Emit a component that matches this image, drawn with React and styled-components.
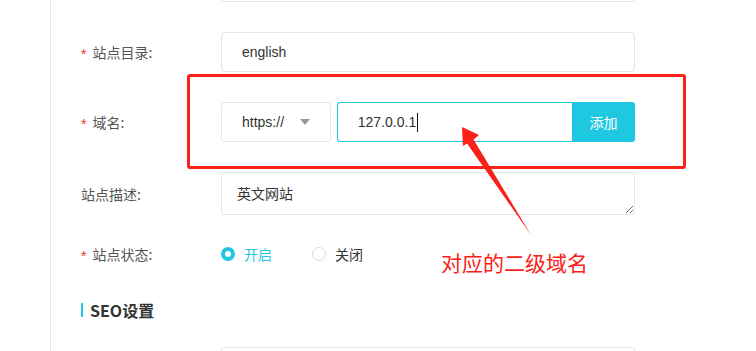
import React from "react";
import styled, { createGlobalStyle } from "styled-components";

const GlobalStyle = createGlobalStyle`
  html, body {
    margin: 0;
    padding: 0;
    background: #fff;
    height: 351px;
    overflow: hidden;
  }
  body {
    font-family: "Liberation Sans", "Noto Sans CJK SC", sans-serif;
    font-size: 14px;
    color: #333;
  }
`;

const CYAN = "#1fc8e1";
const RED = "#fa2118";

export default function App() {
  return (
    <>
      <GlobalStyle />
      <Page>
        <Sidebar />
        <Main>
          <Form>
            <Row $gap={30}>
              <Label />
              <TextInput value="" readOnly />
            </Row>
            <Row $gap={30}>
              <Label>
                <Star>*</Star>站点目录:
              </Label>
              <TextInput value="english" readOnly />
            </Row>
            <Row $gap={30}>
              <Label>
                <Star>*</Star>域名:
              </Label>
              <DomainGroup>
                <Select>
                  https://
                  <Caret />
                </Select>
                <DomainInput>
                  127.0.0.1
                  <TextCursor />
                </DomainInput>
                <AddButton>添加</AddButton>
              </DomainGroup>
            </Row>
            <Row $gap={19}>
              <Label>站点描述:</Label>
              <TextArea value="英文网站" readOnly />
            </Row>
            <Row $gap={26}>
              <Label>
                <Star>*</Star>站点状态:
              </Label>
              <RadioGroup>
                <RadioOption $active>
                  <RadioDot $checked />
                  开启
                </RadioOption>
                <RadioOption>
                  <RadioDot />
                  关闭
                </RadioOption>
              </RadioGroup>
            </Row>
            <SectionTitle>SEO设置</SectionTitle>
            <Row $gap={0}>
              <Label />
              <TextInput value="" readOnly />
            </Row>
          </Form>
        </Main>

        <HighlightBox />
        <Arrow width="756" height="351" viewBox="0 0 756 351">
          <polygon
            points="462,127 479,135 473.5,139.5 531,235 467,143.5 463,146"
            fill={RED}
          />
        </Arrow>
        <Note>对应的二级域名</Note>
      </Page>
    </>
  );
}

const Page = styled.div`
  position: relative;
  display: flex;
  width: 756px;
  height: 351px;
  overflow: hidden;
`;

const Sidebar = styled.div`
  width: 50px;
  flex-shrink: 0;
  border-right: 1px solid #e6e6e6;
`;

const Main = styled.div`
  flex: 1;
  padding-left: 30px;
`;

const Form = styled.div`
  margin-top: -38px;
`;

const Row = styled.div`
  display: grid;
  grid-template-columns: 140px 414px;
  align-items: center;
  min-height: 40px;
  margin-bottom: ${(p) => p.$gap}px;
`;

const Label = styled.div`
  font-family: "Noto Sans CJK SC", sans-serif;
  font-size: 14px;
  color: #555;
  display: flex;
  align-items: center;
`;

const Star = styled.span`
  color: #f0301f;
  font-family: "Liberation Sans", sans-serif;
  font-size: 14px;
  margin-right: 6px;
  position: relative;
  top: 2px;
`;

const TextInput = styled.input`
  box-sizing: border-box;
  width: 414px;
  height: 40px;
  border: 1px solid #e6e6e6;
  border-radius: 3px;
  padding: 0 20px;
  font-family: "Liberation Sans", "Noto Sans CJK SC", sans-serif;
  font-size: 14px;
  color: #333;
  outline: none;
  background: #fff;
`;

const DomainGroup = styled.div`
  display: flex;
  align-items: center;
  gap: 6px;
`;

const Select = styled.div`
  box-sizing: border-box;
  width: 110px;
  height: 40px;
  border: 1px solid #e6e6e6;
  border-radius: 3px;
  padding: 0 20px;
  display: flex;
  align-items: center;
  justify-content: space-between;
  color: #333;
`;

const Caret = styled.span`
  width: 0;
  height: 0;
  border-left: 5px solid transparent;
  border-right: 5px solid transparent;
  border-top: 6px solid #999;
`;

const DomainInput = styled.div`
  box-sizing: border-box;
  width: 236px;
  height: 40px;
  border: 1px solid ${CYAN};
  border-right: none;
  border-radius: 3px 0 0 3px;
  padding: 0 20px;
  display: flex;
  align-items: center;
  color: #333;
  margin-right: -6px;
`;

const TextCursor = styled.span`
  width: 1px;
  height: 19px;
  background: #111;
  margin-left: 1px;
`;

const AddButton = styled.button`
  box-sizing: border-box;
  width: 63px;
  height: 40px;
  border: none;
  border-radius: 0 3px 3px 0;
  background: ${CYAN};
  color: #fff;
  font-family: "Noto Sans CJK SC", sans-serif;
  font-size: 14px;
  padding: 0;
`;

const TextArea = styled.textarea`
  box-sizing: border-box;
  width: 414px;
  height: 43px;
  border: 1px solid #e6e6e6;
  border-radius: 3px;
  padding: 10px 15px;
  font-family: "Noto Sans CJK SC", sans-serif;
  font-size: 14px;
  line-height: 20px;
  color: #333;
  resize: vertical;
  outline: none;
  display: block;
`;

const RadioGroup = styled.div`
  display: flex;
  align-items: center;
  gap: 40px;
`;

const RadioOption = styled.label`
  display: flex;
  align-items: center;
  gap: 9px;
  font-family: "Noto Sans CJK SC", sans-serif;
  font-size: 14px;
  color: ${(p) => (p.$active ? CYAN : "#333")};
`;

const RadioDot = styled.span`
  box-sizing: border-box;
  width: 14px;
  height: 14px;
  border-radius: 50%;
  border: ${(p) => (p.$checked ? `4px solid ${CYAN}` : "1px solid #d9d9d9")};
  background: #fff;
`;

const SectionTitle = styled.div`
  height: 20px;
  display: flex;
  align-items: center;
  font-family: "Noto Sans CJK SC", sans-serif;
  font-weight: 700;
  font-size: 16px;
  color: #333;
  margin-bottom: 27px;

  &::before {
    content: "";
    width: 2px;
    height: 14px;
    background: ${CYAN};
    margin-right: 7px;
  }
`;

const HighlightBox = styled.div`
  position: absolute;
  left: 187px;
  top: 74px;
  width: 499px;
  height: 95px;
  box-sizing: border-box;
  border: 3px solid ${RED};
  border-radius: 3px;
  pointer-events: none;
`;

const Arrow = styled.svg`
  position: absolute;
  left: 0;
  top: 0;
  pointer-events: none;
`;

const Note = styled.div`
  position: absolute;
  left: 441px;
  top: 251px;
  font-family: "Noto Sans CJK SC", sans-serif;
  font-size: 21px;
  line-height: 22px;
  color: ${RED};
`;
